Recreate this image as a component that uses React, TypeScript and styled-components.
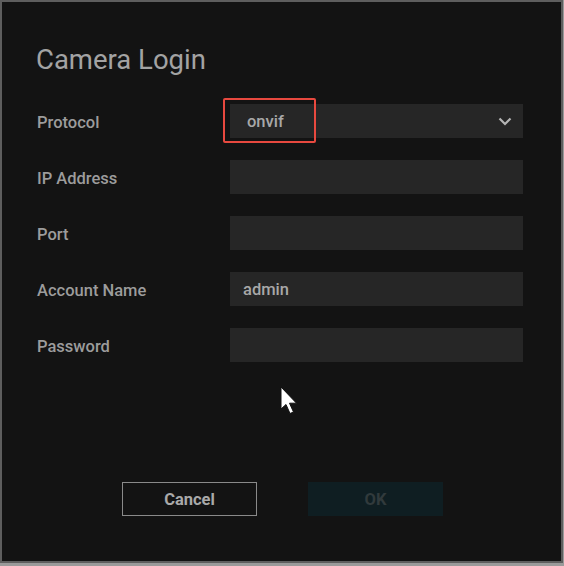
import styled, { createGlobalStyle } from "styled-components";

const GlobalStyle = createGlobalStyle`
  html, body {
    margin: 0;
    padding: 0;
    background: #9a9a9a;
  }
  body {
    font-family: Roboto, "Noto Sans", Arial, sans-serif;
  }
`;

const Dialog = styled.div`
  position: relative;
  box-sizing: border-box;
  width: 563px;
  height: 563px;
  background: #131313;
  border: 2px solid #5e5e5e;
  padding: 41px 38px 0 34px;
  display: flex;
  flex-direction: column;
`;

const Title = styled.h1`
  margin: 0;
  font-size: 27.5px;
  line-height: 33px;
  font-weight: 400;
  color: #a3a3a3;
`;

const Form = styled.div`
  margin-top: 28px;
  margin-left: 1px;
  display: grid;
  grid-template-columns: 193px 293px;
  row-gap: 22px;
  align-items: center;
`;

const Label = styled.label`
  font-size: 16.5px;
  font-weight: 500;
  color: #9c9c9c;
  padding-top: 2px;
`;

const Field = styled.div<{ $pad?: number }>`
  position: relative;
  height: 34px;
  background: #262626;
  display: flex;
  align-items: center;
  padding-left: ${(p) => p.$pad ?? 13}px;
  padding-right: 12px;
  box-sizing: border-box;
  font-size: 16.5px;
  font-weight: 500;
  color: #a8a8a8;
  justify-content: space-between;
`;

const Highlight = styled.div`
  position: absolute;
  left: -7px;
  top: -6px;
  width: 93px;
  height: 45px;
  box-sizing: border-box;
  border: 2px solid #e8493f;
  border-radius: 2px;
`;

const Chevron = styled.svg`
  width: 14px;
  height: 9px;
  margin-right: -1px;
`;

const Actions = styled.div`
  margin-top: 120px;
  display: flex;
  justify-content: center;
  gap: 51px;
  padding-left: 6px;
`;

const Button = styled.button<{ $primary?: boolean }>`
  width: 135px;
  height: 34px;
  box-sizing: border-box;
  font-family: inherit;
  font-size: 16.5px;
  font-weight: 700;
  border: ${(p) => (p.$primary ? "none" : "1px solid #8a8a8a")};
  background: ${(p) => (p.$primary ? "#0f1e22" : "transparent")};
  color: ${(p) => (p.$primary ? "#313a3c" : "#a9a9a9")};
`;

const Pointer = styled.svg`
  position: absolute;
  left: 277px;
  top: 383px;
  width: 22px;
  height: 34px;
`;

export default function App() {
  return (
    <>
      <GlobalStyle />
      <Dialog>
        <Title>Camera Login</Title>
        <Form>
          <Label>Protocol</Label>
          <Field $pad={17}>
            <span>onvif</span>
            <Chevron viewBox="0 0 14 9">
              <path
                d="M1.5 1.5 L7 7 L12.5 1.5"
                fill="none"
                stroke="#b5b5b5"
                strokeWidth="2.2"
              />
            </Chevron>
            <Highlight />
          </Field>
          <Label>IP Address</Label>
          <Field />
          <Label>Port</Label>
          <Field />
          <Label>Account Name</Label>
          <Field>admin</Field>
          <Label>Password</Label>
          <Field />
        </Form>
        <Actions>
          <Button>Cancel</Button>
          <Button $primary>OK</Button>
        </Actions>
        <Pointer viewBox="0 0 22 34">
          <path
            d="M2 2 L2 24 L7 19.5 L11 28.5 L14.5 27 L10.5 18.2 L17.5 18.2 Z"
            fill="#ffffff"
            stroke="#111"
            strokeWidth="1"
          />
        </Pointer>
      </Dialog>
    </>
  );
}
